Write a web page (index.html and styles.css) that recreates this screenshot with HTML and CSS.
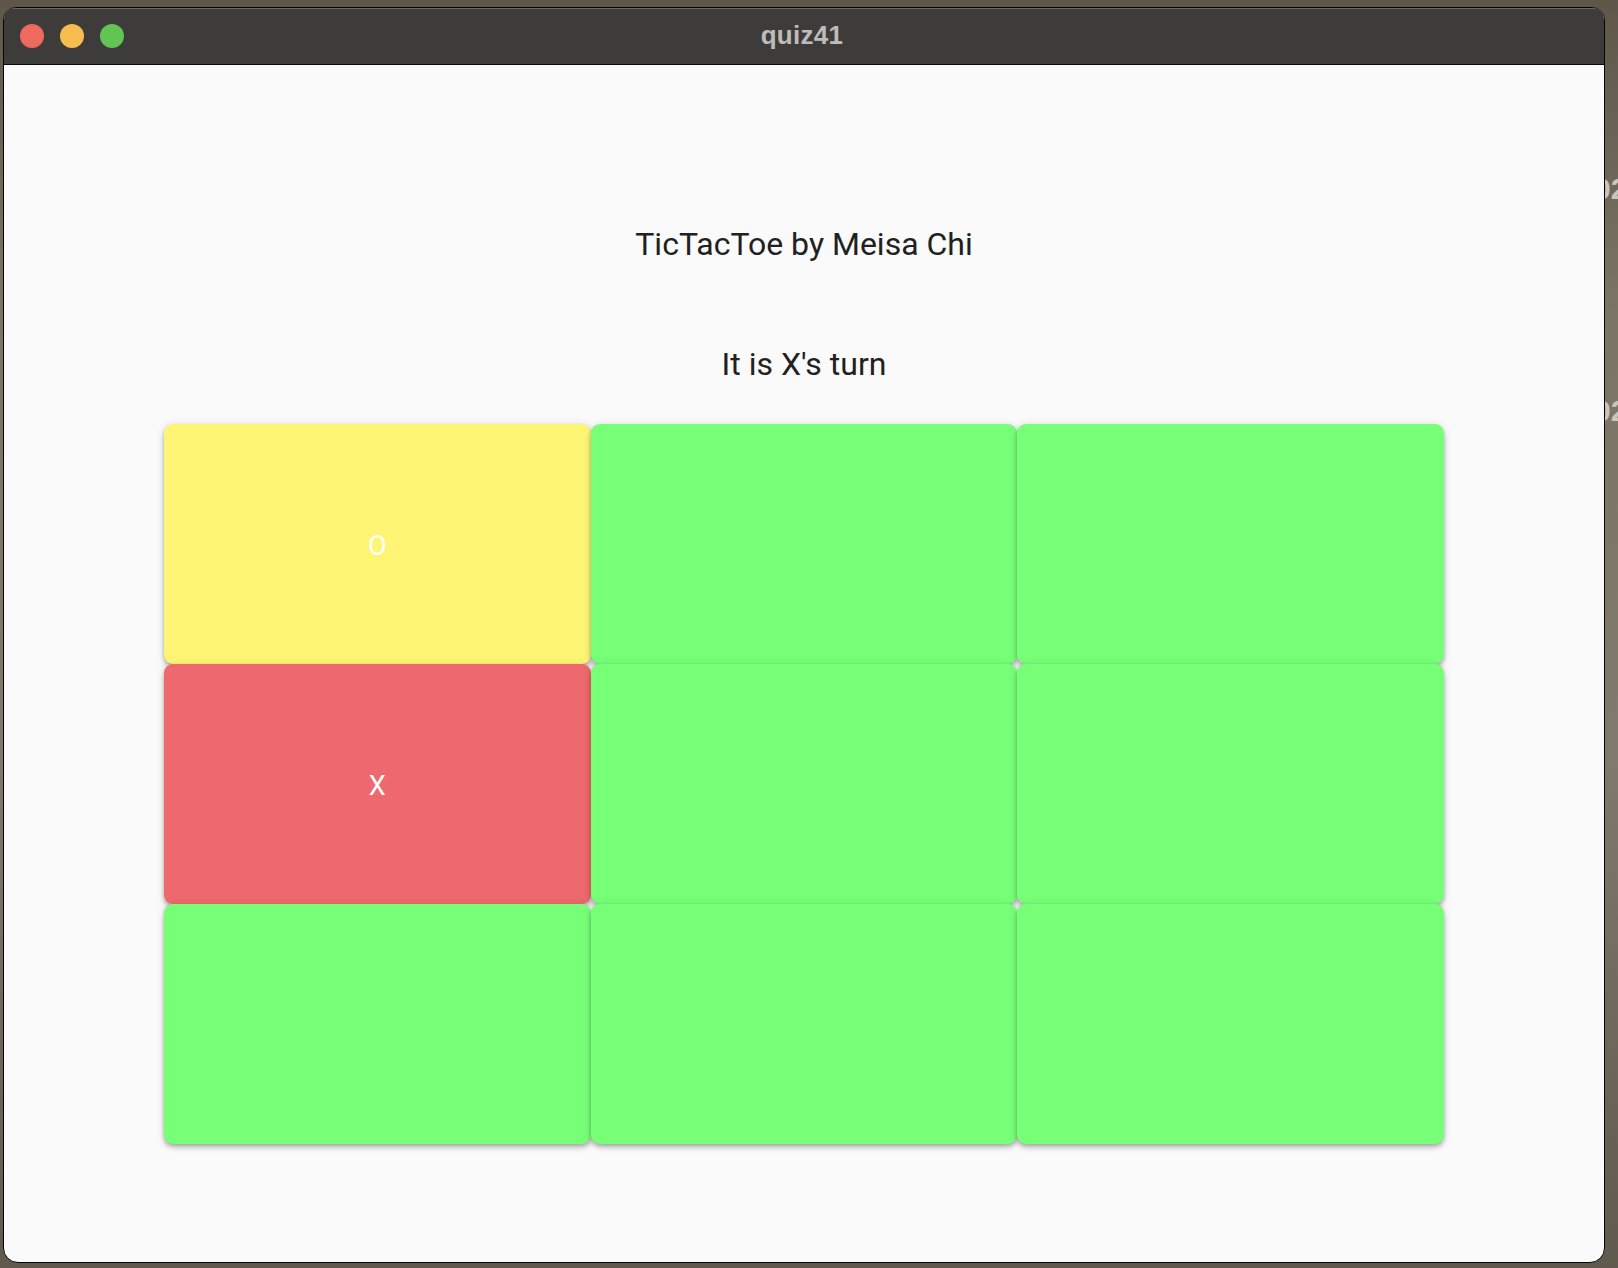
FILE: index.html
```html
<!DOCTYPE html>
<html>
<head>
<meta charset="utf-8">
<title>quiz41</title>
<link rel="stylesheet" href="styles.css">
</head>
<body>
<div class="desktop-label label-a">02</div>
<div class="desktop-label label-b">02</div>
<div class="window">
  <div class="titlebar">
    <div class="lights">
      <span class="light red"></span>
      <span class="light yellow"></span>
      <span class="light green"></span>
    </div>
    <div class="wintitle">quiz41</div>
  </div>
  <div class="content">
    <div class="heading">TicTacToe by Meisa Chi</div>
    <div class="status">It is X's turn</div>
    <div class="board">
      <div class="cell o">O</div>
      <div class="cell"></div>
      <div class="cell"></div>
      <div class="cell x">X</div>
      <div class="cell"></div>
      <div class="cell"></div>
      <div class="cell"></div>
      <div class="cell"></div>
      <div class="cell"></div>
    </div>
  </div>
</div>
</body>
</html>
```

FILE: styles.css
```css
html, body {
  margin: 0;
  padding: 0;
}
body {
  width: 1618px;
  height: 1268px;
  overflow: hidden;
  background: linear-gradient(180deg, #5e5649 0%, #7c7565 25%, #807a6c 60%, #5f594e 100%);
  position: relative;
  font-family: Roboto, "Liberation Sans", sans-serif;
}
.desktop-label {
  position: absolute;
  left: 1594px;
  font-family: "Liberation Sans", sans-serif;
  font-weight: bold;
  font-size: 30px;
  line-height: 34px;
  color: #c9c6c0;
}
.label-a { top: 172px; }
.label-b { top: 394px; }
.window {
  position: relative;
  margin: 7px 0 0 3px;
  width: 1600px;
  height: 1254px;
  border: 1px solid #050505;
  border-radius: 13px 13px 15px 15px;
  overflow: hidden;
  display: flex;
  flex-direction: column;
  background: #fafafa;
}
.titlebar {
  position: relative;
  height: 56px;
  flex: none;
  background: #3d3c3a;
  border-bottom: 1px solid #0a0a0a;
  box-shadow: inset 0 1px 0 #6a6966;
  display: flex;
  align-items: center;
  justify-content: center;
}
.lights {
  position: absolute;
  left: 16px;
  top: 16px;
  display: flex;
  gap: 16px;
}
.light {
  width: 24px;
  height: 24px;
  border-radius: 50%;
}
.red { background: #ee6a5f; }
.yellow { background: #f5be4f; }
.green { background: #61c554; }
.wintitle {
  font-family: "Liberation Sans", sans-serif;
  font-weight: bold;
  font-size: 26px;
  color: #bdbcba;
  letter-spacing: 0.3px;
  margin-left: -4px;
  padding-bottom: 2px;
}
.content {
  flex: 1;
  display: flex;
  flex-direction: column;
  align-items: center;
  padding-top: 159px;
  color: #212121;
}
.heading,
.status {
  font-size: 32px;
  line-height: 40px;
  white-space: nowrap;
}
.status {
  margin-top: 80px;
}
.board {
  margin-top: 40px;
  width: 1280px;
  display: grid;
  grid-template-columns: repeat(3, 1fr);
  grid-template-rows: repeat(3, 240px);
}
.cell {
  background: #77ff77;
  border-radius: 9px;
  box-shadow: 0 2px 4px -1px rgba(0,0,0,0.22), 0 4px 5px 0 rgba(0,0,0,0.14), 0 1px 10px 0 rgba(0,0,0,0.12);
  display: flex;
  align-items: center;
  justify-content: center;
  color: #ffffff;
  font-size: 27px;
  padding-top: 3px;
  box-sizing: border-box;
}
.cell.o { background: #fff575; }
.cell.x { background: #ed696e; }
```
